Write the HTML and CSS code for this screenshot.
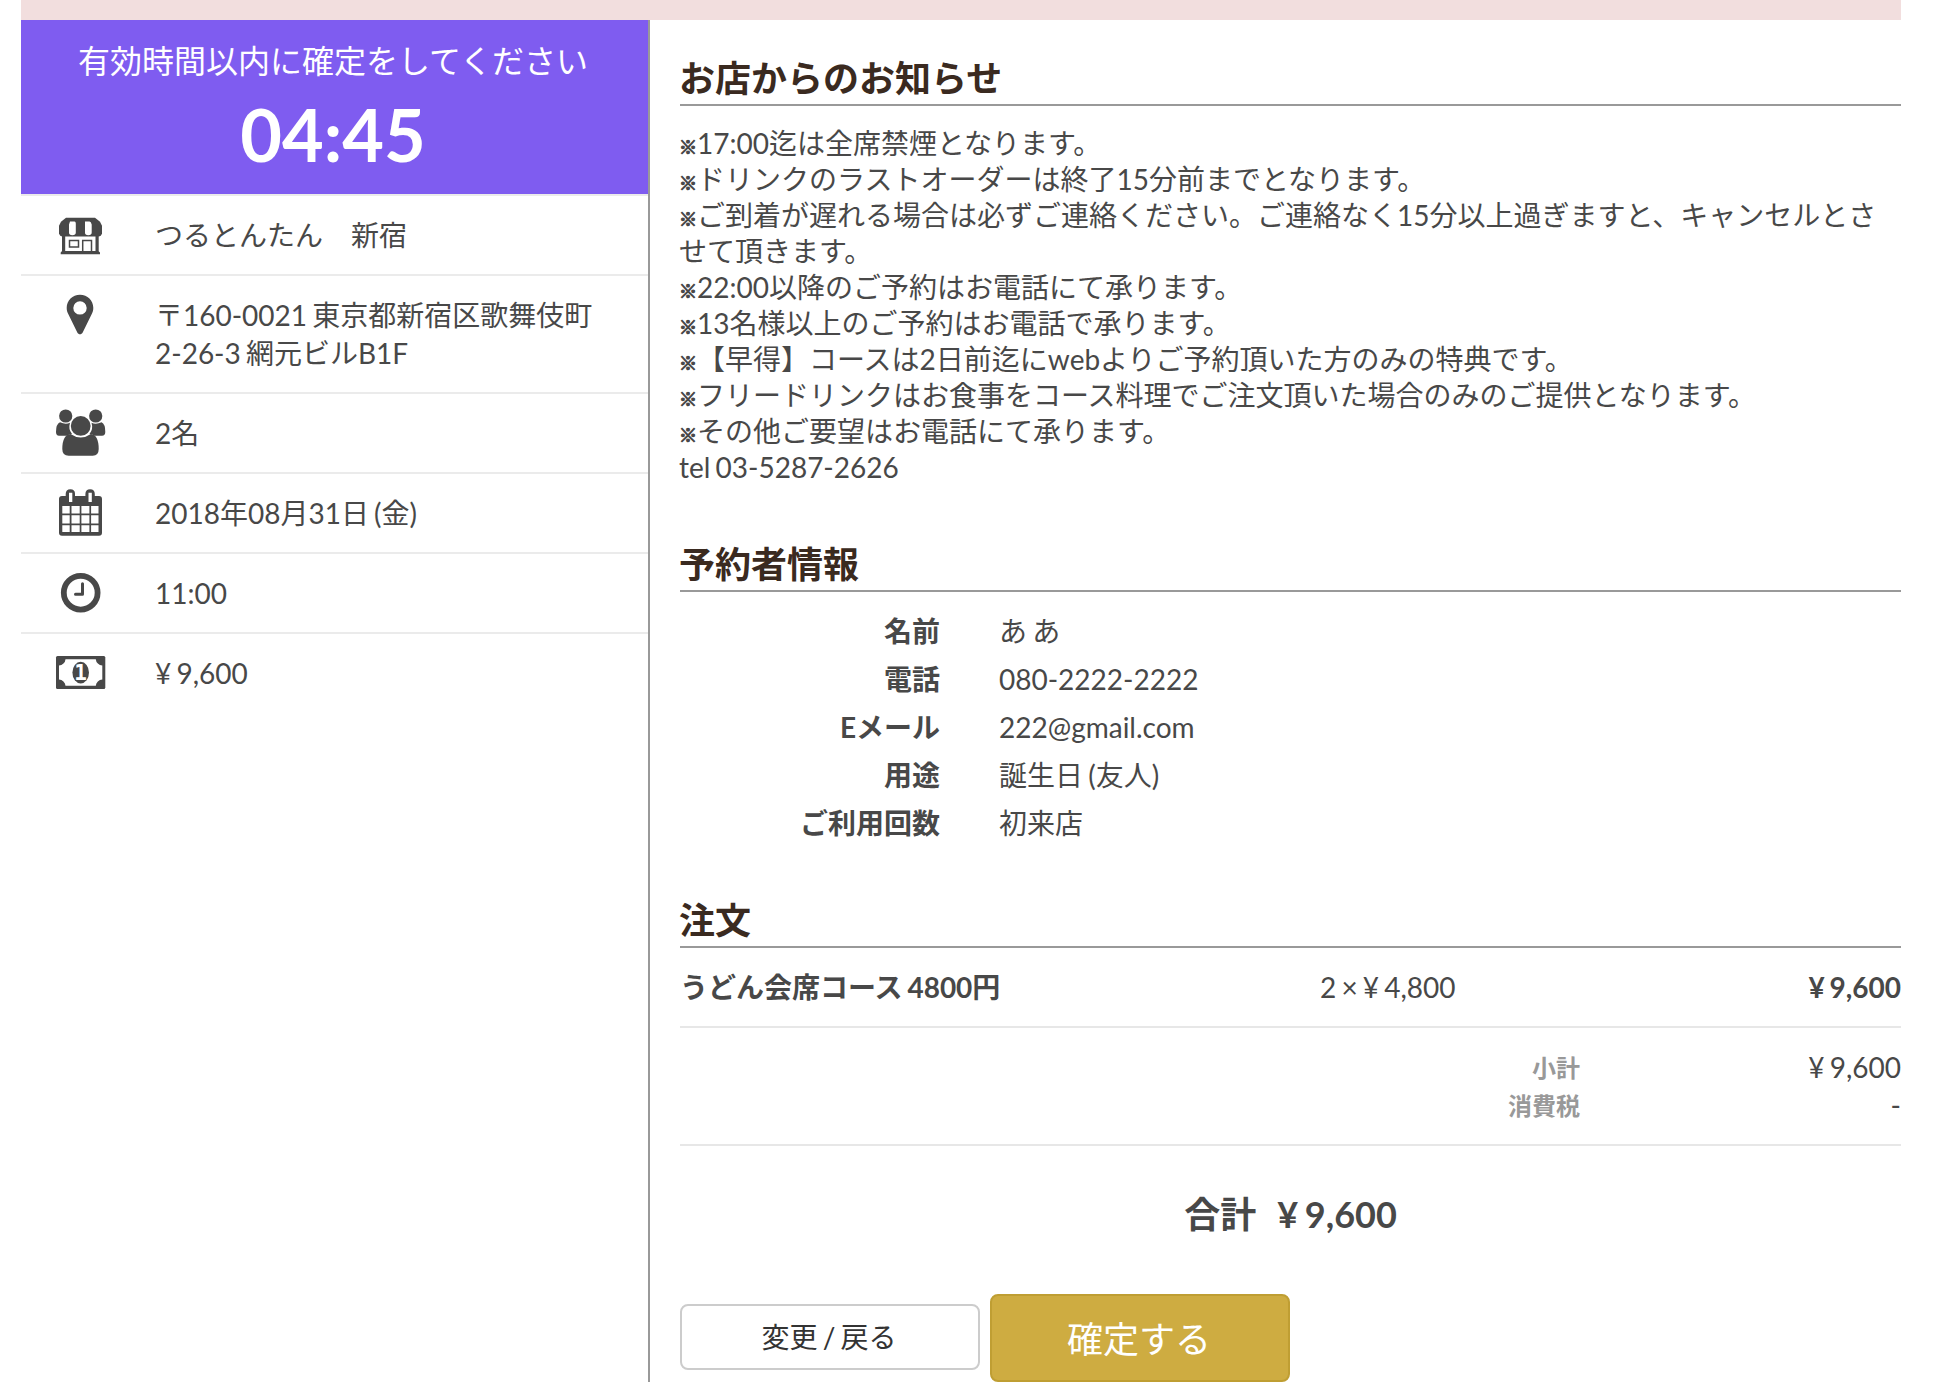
FILE: index.html
```html
<!DOCTYPE html>
<html lang="ja">
<head>
  <meta charset="UTF-8" />
  <title>予約内容の確認</title>
  <link rel="stylesheet" href="styles.css">
</head>
<body>
  <div class="container">
    <div class="alert-bar"></div>
    <div class="columns">
      <aside class="sidebar">
        <div class="timer">
          <p class="timer-text">有効時間以内に確定をしてください</p>
          <p class="timer-count">04:45</p>
        </div>
        <ul class="summary">
          <li>
            <svg class="icon" viewBox="0 0 50 50">
              <path d="M11 7.700h29l5 4 2 4v8q-1 2.800-3.500 2.800h-36Q5 26.500 4 23.700v-8l2-4z"/>
              <path d="M7 25h3.200v17H7zM40.500 25h3.200v17h-3.200zM7 41h36.500l1.500 1.500v1.800H5.700v-1.800z"/>
              <path class="cut" d="M15 11.500h4.500q1.300 0 1.300 2v9q0 2.700-3.400 2.700T14 22.500v-8zM30 11.500h4.500q1.500 0 2.200 3v8q0 2.700-3.400 2.700T30 22.500z"/>
              <path class="line" d="M14.500 30.500h9v6.500h-9zM27.700 41V30.500h8.800V41"/>
            </svg>
            <span>つるとんたん　新宿</span>
          </li>
          <li>
            <svg class="icon" viewBox="0 0 50 50">
              <path fill-rule="evenodd" d="M25 4.700c-7.500 0-13.300 5.800-13.300 13.100 0 2.500.5 4 1.300 5.700l9.300 19c1.200 2.400 4.200 2.400 5.400 0l9.300-19c.8-1.700 1.300-3.200 1.300-5.700C38.300 10.500 32.500 4.700 25 4.700zM25 11.200a6.700 6.700 0 1 1 0 13.400 6.700 6.700 0 0 1 0-13.400z"/>
            </svg>
            <span>〒160-0021 東京都新宿区歌舞伎町2-26-3 網元ビルB1F</span>
          </li>
          <li>
            <svg class="icon" viewBox="0 0 50 50">
              <circle cx="10.700" cy="8" r="6.600"/>
              <circle cx="40.700" cy="8" r="6.600"/>
              <path d="M5 14.300q5.500 2.500 10 .5-2 6.500 2 11.200-3 .2-5 1.700H4Q1 27.500 1 24q0-8 4-9.700zM46.500 14.300q-5.500 2.500-10 .5 2 6.500-2 11.200 3 .2 5 1.700h7.500q3.300-.2 3.300-3.700 0-8-3.800-9.700z"/>
              <circle cx="25.700" cy="17.900" r="9.900"/>
              <path d="M15.500 26q10.200 7 20.400 0 7.800 1 7.800 15 0 6.700-6 6.700h-24q-6.400 0-6.400-6.700 0-14 8.200-15z"/>
            </svg>
            <span>2名</span>
          </li>
          <li>
            <svg class="icon" viewBox="0 0 50 50">
              <path d="M7 8h3.700V6q0-4.700 4.700-4.700T20 6v2h10.400V6q0-4.700 4.700-4.700T39.800 6v2H44q3 0 3 3v33.700q0 3-3 3H7q-3 0-3-3V11q0-3 3-3z"/>
              <path class="cut" d="M14 4.700h3.300V14H14zM33.500 4.700h3.300V14h-3.300zM7.300 18h7.400v7.500H7.300zM16.500 18h8.200v7.500h-8.200zM26.400 18h8v7.500h-8zM36.100 18h7.400v7.500h-7.400zM7.300 27.300h7.400v8.200H7.300zM16.500 27.300h8.200v8.200h-8.200zM26.400 27.300h8v8.200h-8zM36.100 27.300h7.400v8.200h-7.400zM7.300 37.300h7.400V44H7.300zM16.500 37.300h8.200V44h-8.200zM26.400 37.300h8V44h-8zM36.100 37.300h7.400V44h-7.400z"/>
            </svg>
            <span>2018年08月31日 (金)</span>
          </li>
          <li>
            <svg class="icon" viewBox="0 0 50 50">
              <circle class="ring" cx="25.700" cy="24.700" r="16.900"/>
              <path class="hands" d="M27.500 15.800v10.400h-7"/>
            </svg>
            <span>11:00</span>
          </li>
          <li>
            <svg class="icon" viewBox="0 0 50 50">
              <rect x="1" y="8" width="49.300" height="33" rx="1.500"/>
              <path class="cut" d="M10.500 11.200h30.300a6.800 6.800 0 0 0 6.500 6.300v14a6.800 6.800 0 0 0-6.500 6.300H10.500A6.800 6.800 0 0 0 4 31.500v-14a6.800 6.800 0 0 0 6.500-6.300z"/>
              <ellipse cx="25.700" cy="24.600" rx="8.300" ry="10.800"/>
              <text class="bill-number" x="25.700" y="32.400">1</text>
            </svg>
            <span>¥ 9,600</span>
          </li>
        </ul>
      </aside>

      <main class="main">
        <section class="notice">
          <h2>お店からのお知らせ</h2>
          <p>
            <i>※</i>17:00迄は全席禁煙となります。<br>
            <i>※</i>ドリンクのラストオーダーは終了15分前までとなります。<br>
            <i>※</i>ご到着が遅れる場合は必ずご連絡ください。ご連絡なく15分以上過ぎますと、キャンセルとさせて頂きます。<br>
            <i>※</i>22:00以降のご予約はお電話にて承ります。<br>
            <i>※</i>13名様以上のご予約はお電話で承ります。<br>
            <i>※</i>【早得】コースは2日前迄にwebよりご予約頂いた方のみの特典です。<br>
            <i>※</i>フリードリンクはお食事をコース料理でご注文頂いた場合のみのご提供となります。<br>
            <i>※</i>その他ご要望はお電話にて承ります。<br>
            tel 03-5287-2626
          </p>
        </section>

        <section class="customer">
          <h2>予約者情報</h2>
          <dl>
            <dt>名前</dt>
            <dd>あ あ</dd>
            <dt>電話</dt>
            <dd>080-2222-2222</dd>
            <dt>Eメール</dt>
            <dd>222@gmail.com</dd>
            <dt>用途</dt>
            <dd>誕生日 (友人)</dd>
            <dt>ご利用回数</dt>
            <dd>初来店</dd>
          </dl>
        </section>

        <section class="order">
          <h2>注文</h2>
          <div class="order-row">
            <strong>うどん会席コース 4800円</strong>
            <span>2 × ¥ 4,800</span>
            <strong class="amount">¥ 9,600</strong>
          </div>
          <div class="subtotal">
            <span class="label">小計</span>
            <span class="amount">¥ 9,600</span>
            <span class="label">消費税</span>
            <span class="amount">-</span>
          </div>
          <div class="total">
            <span>合計</span>
            <span>¥ 9,600</span>
          </div>
        </section>

        <div class="buttons">
          <button class="btn btn-default">変更 / 戻る</button>
          <button class="btn btn-confirm">確定する</button>
        </div>
      </main>
    </div>
  </div>
</body>
</html>
```
FILE: styles.css
```css
* {
  box-sizing: border-box;
}

body {
  margin: 0;
  height: 1382px;
  overflow: hidden;
  background: #fff;
  color: #484848;
  font-family: Lato, 'Noto Sans CJK JP', sans-serif;
  font-size: 28px;
  line-height: 38px;
  word-spacing: -2px;
}

h2, p, ul, dl, dd {
  margin: 0;
  padding: 0;
}

.container {
  width: 1880px;
  margin-left: 21px;
}

.alert-bar {
  height: 20px;
  background: #f2dede;
}

.columns {
  display: flex;
  height: 1362px;
}

/* sidebar */
.sidebar {
  width: 629px;
  flex: none;
  border-right: 2px solid #999;
}

.timer {
  height: 174px;
  padding: 19px 3px 0 0;
  background: #7f5cf0;
  color: #fff;
  text-align: center;
}

.timer-text {
  font-size: 32px;
  line-height: 44px;
}

.timer-count {
  font-size: 72px;
  font-weight: bold;
  line-height: 102px;
}

.summary {
  list-style: none;
}

.summary li {
  display: flex;
  align-items: flex-start;
  padding: 20px 50px 20px 34px;
  border-top: 2px solid #ebebeb;
}

.icon {
  flex: none;
  width: 50px;
  height: 50px;
  margin: -6px 50px -6px 0;
  overflow: visible;
  fill: #484848;
}

.icon .cut {
  fill: #fff;
}

.icon .line {
  fill: none;
  stroke: #484848;
  stroke-width: 1.5;
}

.icon .ring {
  fill: none;
  stroke: #484848;
  stroke-width: 5.8;
}

.icon .hands {
  fill: none;
  stroke: #484848;
  stroke-width: 3;
  stroke-linecap: round;
  stroke-linejoin: round;
}

.icon .bill-number {
  fill: #fff;
  font-family: 'DejaVu Sans Mono', monospace;
  font-size: 21px;
  font-weight: bold;
  text-anchor: middle;
}

/* main */
.main {
  flex: 1;
  padding: 34px 0 0 30px;
}

h2 {
  height: 52px;
  border-bottom: 2px solid #999;
  color: #3a2a20;
  font-size: 36px;
  line-height: 48px;
  text-indent: -1px;
}

.notice {
  height: 486px;
}

.notice p {
  margin-left: -1px;
  padding-top: 19px;
  line-height: 36px;
}

.notice i {
  display: inline-block;
  width: 18px;
  font-size: 18px;
  font-style: normal;
  font-weight: bold;
  line-height: 1;
  -webkit-text-stroke: 1.2px #484848;
}

.customer {
  height: 356px;
}

.customer dl {
  display: grid;
  grid-template-columns: 260px 1fr;
  column-gap: 59px;
  padding-top: 15px;
  line-height: 48px;
}

.customer dt {
  font-weight: bold;
  text-align: right;
}

.order-row {
  display: grid;
  grid-template-columns: 640px 1fr 1fr;
  height: 80px;
  padding-top: 20px;
  border-bottom: 2px solid #e7e7e7;
}

.amount {
  text-align: right;
}

.subtotal {
  display: grid;
  grid-template-columns: 900px 1fr;
  padding: 20px 0;
  border-bottom: 2px solid #e7e7e7;
}

.subtotal .label {
  padding-top: 1px;
  color: #999;
  font-size: 24px;
  font-weight: bold;
  line-height: 37px;
  text-align: right;
}

.total {
  display: flex;
  justify-content: center;
  gap: 21px;
  margin-top: 42px;
  font-size: 36px;
  font-weight: bold;
  line-height: 52px;
}

.buttons {
  display: flex;
  align-items: flex-start;
  gap: 10px;
  margin-top: 54px;
}

.btn {
  width: 300px;
  padding: 0 2px 3px 0;
  border: 2px solid #ccc;
  border-radius: 8px;
  background: #fff;
  color: #333;
  font-family: inherit;
  font-size: 28px;
  word-spacing: -2px;
  cursor: pointer;
}

.btn-default {
  height: 66px;
  margin-top: 10px;
}

.btn-confirm {
  height: 88px;
  border-color: #bf9e33;
  background: #ceac41;
  color: #fff;
  font-size: 36px;
}
```
